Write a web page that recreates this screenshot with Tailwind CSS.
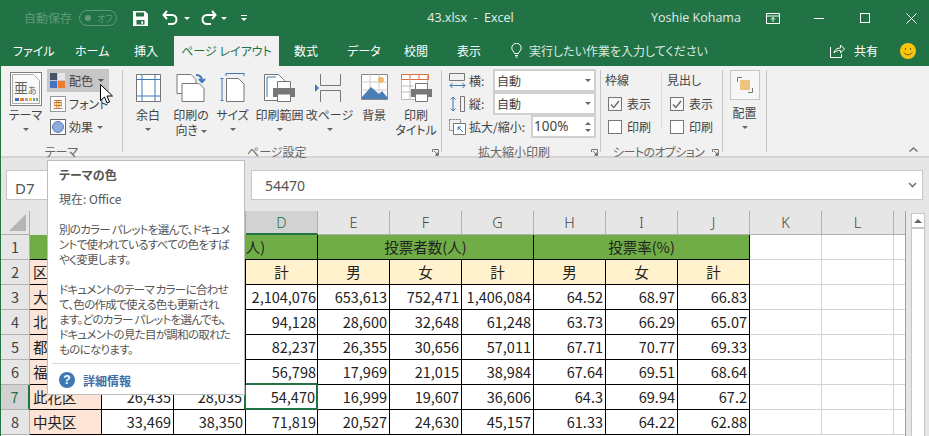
<!DOCTYPE html>
<html lang="ja">
<head>
<meta charset="utf-8">
<script src="https://cdn.jsdelivr.net/npm/@tailwindcss/browser@4"></script>
</head>
<body class="w-[929px] h-[436px] overflow-hidden relative bg-[#e6e6e6] font-['Noto_Sans_CJK_JP',sans-serif] [font-feature-settings:'palt'] text-[12px] text-[#444]">
<div class="absolute left-0 top-0 bottom-0 w-px bg-[#217346] z-20"></div>

<!-- title bar -->
<header class="h-[36px] bg-[#217346] flex items-center text-white relative">
  <span class="ml-[24px] text-[#5f9a7b] text-[12px] leading-none w-[50px]">自動保存</span>
  <span class="ml-[5px] w-[38px] h-[16px] rounded-full border border-[#5f9a7b] flex items-center pl-[5px] gap-[6px] text-[#5f9a7b] text-[9px] leading-none"><i class="w-[6px] h-[6px] rounded-full bg-[#5f9a7b]"></i>オフ</span>
  <svg class="ml-[16px]" width="15" height="15" viewBox="0 0 15 15"><path fill="#fff" d="M0 0h12l3 3v12H0z"/><path fill="#217346" d="M3 1.500h8v4H3zM3.500 9h8v4.500h-8z"/><path fill="#fff" d="M8.500 10h1.500v3H8.500z"/></svg>
  <svg class="ml-[14px]" width="18" height="16" viewBox="0 0 18 16" fill="none" stroke="#fff" stroke-width="2"><path d="M5 1 1.500 5 5 9"/><path d="M2 5h8a4.500 4.500 0 0 1 0 9H6"/></svg>
  <i class="ml-[4px] w-0 h-0 border-x-[3px] border-x-transparent border-t-[3px] border-t-white"></i>
  <svg class="ml-[9px]" width="18" height="16" viewBox="0 0 18 16" fill="none" stroke="#fff" stroke-width="2"><path d="M13 1l3.500 4L13 9"/><path d="M16 5H8a4.500 4.500 0 0 0 0 9h4"/></svg>
  <i class="ml-[4px] w-0 h-0 border-x-[3px] border-x-transparent border-t-[3px] border-t-white"></i>
  <span class="ml-[14px] flex flex-col items-center gap-[2px]"><i class="w-[6px] h-px bg-white"></i><i class="w-0 h-0 border-x-[3px] border-x-transparent border-t-[3px] border-t-white"></i></span>
  <span class="ml-[176px] w-[95px] text-center font-['Open_Sans',sans-serif] text-[12.500px] text-[#e9f1ec] whitespace-pre">43.xlsx  -  Excel</span>
  <span class="ml-[133px] font-['Open_Sans',sans-serif] text-[12.500px] text-[#e0ebe5] w-[92px] whitespace-nowrap">Yoshie Kohama</span>
  <svg class="ml-[23px]" width="14" height="11" viewBox="0 0 14 11" fill="none" stroke="#fff"><path d="M.5.500h13v10H.5zM.5 3h13M7 9V4.500M5 6.500l2-2 2 2"/></svg>
  <i class="ml-[34px] w-[10px] h-px bg-white"></i>
  <i class="ml-[36px] w-[10px] h-[10px] border border-white"></i>
  <svg class="ml-[36px]" width="11" height="11" viewBox="0 0 11 11" stroke="#fff"><path d="M.5.500l10 10M10.500.500l-10 10"/></svg>
</header>

<!-- tabs -->
<nav class="h-[30px] bg-[#217346] flex items-stretch text-white text-[12px] leading-[30px] whitespace-nowrap">
  <span class="ml-[13px] w-[34px]">ファイル</span>
  <span class="ml-[28px] w-[31px]">ホーム</span>
  <span class="ml-[28px] w-[25px]">挿入</span>
  <span class="ml-[15px] w-[105px] bg-[#f1f1f1] text-[#217346] text-center">ページ レイアウト</span>
  <span class="ml-[15px] w-[25px]">数式</span>
  <span class="ml-[28px] w-[30px]">データ</span>
  <span class="ml-[27px] w-[24px]">校閲</span>
  <span class="ml-[29px] w-[25px]">表示</span>
  <svg class="ml-[29px] mt-[7px]" width="11" height="15" viewBox="0 0 11 15" fill="none" stroke="#fff"><path d="M3.500 10.500C3 8.500.8 7.500.8 5a4.700 4.700 0 0 1 9.400 0c0 2.500-2.200 3.500-2.700 5.500zM4 12.500h3M4.500 14h2"/></svg>
  <span class="ml-[7px] w-[163px] text-[#dbe8e1]">実行したい作業を入力してください</span>
  <svg class="ml-[138px] mt-[7px]" width="15" height="15" viewBox="0 0 15 15" fill="none" stroke="#fff"><path d="M.5 4v10.500h11V11M4 10c.5-3.500 3-5 6.500-5V2l4 4-4 4V7.500C7.500 7.500 5.500 8 4 10z"/></svg>
  <span class="ml-[9px] w-[25px]">共有</span>
  <span class="ml-[21px] mt-[7px] w-[16px] h-[16px] rounded-full bg-[#f8c40c] relative"><svg class="absolute inset-0" viewBox="0 0 16 16" fill="none" stroke="#7a5a00"><path d="M4 9.500c1.500 3 6.500 3 8 0"/><path d="M5.500 5v2M10.500 5v2"/></svg></span>
</nav>

<!-- ribbon -->
<section class="h-[92px] bg-[#f1f1f1] border-b-2 border-b-[#d4d4d4] flex items-stretch leading-none text-[#444]">
  <!-- theme group -->
  <div class="w-[122px] border-r border-r-[#c6c6c6] my-[4px] ml-[1px] relative">
    <div class="flex">
      <div class="w-[43px] ml-[3px] flex flex-col items-center pt-[2px]">
        <div class="w-[32px] h-[34px] border border-[#808080] bg-white p-[1px]">
          <svg width="28" height="30" viewBox="0 0 28 30"><path fill="#fafafa" stroke="#aaa" d="M.5.500h21l6 6v23H.5z"/><text x="2" y="19" font-size="14" fill="#666" font-family="Noto Sans CJK JP">亜</text><text x="16" y="20" font-size="9" fill="#666" font-family="Noto Sans CJK JP">あ</text><path fill="#3f6fb5" d="M3 24h4v3H3z"/><path fill="#e87d2b" d="M8 24h4v3H8z"/><path fill="#a5a5a5" d="M13 24h3v3h-3z"/><path fill="#ffc000" d="M17 24h3v3h-3z"/><path fill="#5b9bd5" d="M21 24h2v3h-2z"/><path fill="#70ad47" d="M24 24h2v3h-2z"/></svg>
        </div>
        <span class="mt-[2px] text-[12px] leading-[14px]">テーマ</span>
        <i class="mt-[6px] w-0 h-0 border-x-[3px] border-x-transparent border-t-[3px] border-t-[#666]"></i>
      </div>
      <div class="flex flex-col ml-0">
        <div class="w-[62px] h-[23px] bg-[#c6c6c6] -mt-px flex items-center pl-[3px]">
          <svg width="15" height="15" viewBox="0 0 15 15"><path fill="#44546a" d="M0 0h7v7H0z"/><path fill="#e7e6e6" d="M8 0h7v7H8z"/><path fill="#4472c4" d="M0 8h7v7H0z"/><path fill="#ed7d31" d="M8 8h7v7H8z"/></svg>
          <span class="ml-[4px] w-[24px]">配色</span>
          <i class="ml-[5px] w-0 h-0 border-x-[3px] border-x-transparent border-t-[3px] border-t-[#555]"></i>
        </div>
        <div class="h-[24px] flex items-center pl-[3px]">
          <span class="w-[16px] h-[16px] border border-[#999] bg-white text-[#b5651d] text-[10px] leading-[14px] text-center">亜</span>
          <span class="ml-[3px] whitespace-nowrap">フォント</span>
        </div>
        <div class="h-[22px] flex items-center pl-[3px]">
          <span class="w-[16px] h-[16px] border border-[#666] bg-white flex items-center justify-center"><i class="w-[12px] h-[12px] rounded-full bg-[#8faadc] border border-[#5b7fc0]"></i></span>
          <span class="ml-[3px] w-[24px]">効果</span>
          <i class="ml-[4px] w-0 h-0 border-x-[3px] border-x-transparent border-t-[3px] border-t-[#666]"></i>
        </div>
      </div>
    </div>
    <div class="absolute left-0 right-0 top-[75px] text-center text-[#666] leading-[14px]">テーマ</div>
  </div>

  <!-- page setup group -->
  <div class="w-[319px] border-r border-r-[#c6c6c6] my-[4px] relative flex pl-[3px]">
    <div class="w-[44px] flex flex-col items-center pt-[4px]">
      <svg width="25" height="28" viewBox="0 0 25 28" fill="none"><path stroke="#777" fill="#fff" d="M.5.500h24v27H.5z"/><path stroke="#3f78b5" d="M6 .5v27M19 .5v27M.5 5.500h24M.5 22h24"/></svg>
      <span class="mt-[6px] leading-[14px]">余白</span>
      <i class="mt-[6px] w-0 h-0 border-x-[3px] border-x-transparent border-t-[3px] border-t-[#666]"></i>
    </div>
    <div class="w-[42px] flex flex-col items-center pt-[4px]">
      <svg width="30" height="28" viewBox="0 0 30 28" fill="none"><path stroke="#777" fill="#fff" d="M1 .5h14l5 5v14H1z"/><path stroke="#777" fill="#fff" d="M6 9.500h17l5 5v13H6z"/><path stroke="#3f78b5" stroke-width="2" d="M20 1c4 0 6 2 6 6M23 5l3 3 3-3"/></svg>
      <span class="mt-[6px] leading-[14px] whitespace-nowrap">印刷の</span>
      <span class="leading-[14px] mt-px whitespace-nowrap">向き <i class="inline-block align-middle w-0 h-0 border-x-[3px] border-x-transparent border-t-[3px] border-t-[#666]"></i></span>
    </div>
    <div class="w-[41px] flex flex-col items-center pt-[3px]">
      <svg width="25" height="29" viewBox="0 0 25 29" fill="none"><path stroke="#3f78b5" d="M6 .5h18M6 0v3M24 0v3M2 5v23M.5 5.500h3M.5 27.500h3"/><path stroke="#777" fill="#fff" d="M6.500 5.500h12l5.500 5.500v17.500H6.500z"/></svg>
      <span class="mt-[6px] leading-[14px] whitespace-nowrap">サイズ</span>
      <i class="mt-[6px] w-0 h-0 border-x-[3px] border-x-transparent border-t-[3px] border-t-[#666]"></i>
    </div>
    <div class="w-[53px] flex flex-col items-center pt-[4px]">
      <svg width="31" height="28" viewBox="0 0 31 28" fill="none"><path stroke="#777" fill="#fff" d="M.5.500h14l6 6v20H.5z"/><path stroke="#3f78b5" d="M3 3h9M3 3v20"/><path fill="#777" d="M9 14h22v9H9z"/><path fill="#fff" stroke="#777" d="M13.500 7.500h13v7h-13zM13.500 20h13v7.500h-13z"/></svg>
      <span class="mt-[6px] leading-[14px] whitespace-nowrap">印刷範囲</span>
      <i class="mt-[6px] w-0 h-0 border-x-[3px] border-x-transparent border-t-[3px] border-t-[#666]"></i>
    </div>
    <div class="w-[47px] flex flex-col items-center pt-[4px]">
      <svg class="-ml-[2px]" width="27" height="28" viewBox="0 0 27 28" fill="none"><path stroke="#777" d="M5.500 0v11.500h20V0M5.500 28V16.500h20V28"/><path fill="#3f78b5" d="M0 10v8l4-4z"/></svg>
      <span class="mt-[6px] leading-[14px] whitespace-nowrap">改ページ</span>
      <i class="mt-[6px] w-0 h-0 border-x-[3px] border-x-transparent border-t-[3px] border-t-[#666]"></i>
    </div>
    <div class="w-[42px] flex flex-col items-center pt-[4px]">
      <svg width="27" height="26" viewBox="0 0 27 26"><path fill="#fff" stroke="#888" d="M.5.500h26v25H.5z"/><path stroke="#ccc" fill="none" d="M9 .5v25M18 .5v25M.5 8h26M.5 16h26"/><circle cx="20" cy="6" r="3" fill="#eeb96a"/><path fill="#4a7db5" d="M1 23l9-10 8 7 3-3 5 6v2H1z"/></svg>
      <span class="mt-[8px] leading-[14px] whitespace-nowrap">背景</span>
    </div>
    <div class="w-[42px] flex flex-col items-center pt-[4px]">
      <svg width="31" height="28" viewBox="0 0 31 28" fill="none"><path stroke="#bbb" fill="#fff" d="M.5.500h26v25H.5z"/><path stroke="#d86f3c" d="M.5.500h27v5H.5zM9 .5v5M18 .5v5"/><path stroke="#bbb" d="M.5 12h12M.5 18h12M9 5v20"/><path fill="#777" d="M10 15h21v8H10z"/><path fill="#fff" stroke="#777" d="M14.500 9.500h12v6h-12zM14.500 20h12v7.500h-12z"/></svg>
      <span class="mt-[6px] leading-[14px] whitespace-nowrap">印刷</span>
      <span class="mt-px leading-[14px] whitespace-nowrap">タイトル</span>
    </div>
    <div class="absolute left-[124px] top-[75px] text-[#666] leading-[14px] whitespace-nowrap">ページ設定</div>
    <svg class="absolute left-[309px] top-[79px]" width="7" height="7" viewBox="0 0 7 7" fill="none" stroke="#777"><path d="M.5 3V.5H6.500V6.500H3.500M2 2l3.500 3.500M5.500 3.500v2h-2"/></svg>
  </div>

  <!-- scale group -->
  <div class="w-[159px] border-r border-r-[#c6c6c6] my-[4px] relative pl-[7px]">
    <div class="h-[23px] -mt-px flex items-center">
      <svg width="17" height="16" viewBox="0 0 17 16" fill="none" stroke="#777"><path d="M.5.500h15v7H.5z"/><path stroke="#3f78b5" d="M1 12.500h15M1 12.500l2.500-2.500M1 12.500L3.500 15M16 12.500L13.500 10M16 12.500L13.500 15"/></svg>
      <span class="ml-[3px] w-[24px]">横:</span>
      <div class="w-[103px] h-[23px] bg-white border-2 border-[#d0d0d0] flex items-center pl-[2px] justify-between pr-[3px]"><span>自動</span><i class="w-0 h-0 border-x-[3px] border-x-transparent border-t-[3px] border-t-[#666]"></i></div>
    </div>
    <div class="h-[23px] flex items-center">
      <svg width="17" height="16" viewBox="0 0 17 16" fill="none" stroke="#777"><path d="M11.500.5h4v15h-4z"/><path stroke="#3f78b5" d="M4 1v14M4 1L1.500 3.500M4 1l2.500 2.500M4 15l-2.500-2.500M4 15l2.500-2.500"/></svg>
      <span class="ml-[3px] w-[24px]">縦:</span>
      <div class="w-[103px] h-[23px] bg-white border-2 border-[#d0d0d0] flex items-center pl-[2px] justify-between pr-[3px]"><span>自動</span><i class="w-0 h-0 border-x-[3px] border-x-transparent border-t-[3px] border-t-[#666]"></i></div>
    </div>
    <div class="h-[23px] flex items-center">
      <svg width="17" height="16" viewBox="0 0 17 16" fill="none" stroke="#777"><path stroke-dasharray="2 1" d="M.5.500h11v11H.5z"/><path d="M4.500 4.500h12v11h-12z" fill="#fff"/><path stroke="#3f78b5" d="M14 13l-5-5M9 8h3M9 8v3"/></svg>
      <span class="ml-[3px] w-[62px] whitespace-nowrap">拡大/縮小:</span>
      <div class="w-[65px] h-[23px] bg-white border-2 border-[#d0d0d0] flex items-center pl-[1px] justify-between pr-[3px]"><span class="font-['Noto_Sans',sans-serif] text-[13.500px]">100%</span><span class="flex flex-col gap-[4px]"><i class="w-0 h-0 block border-x-[3px] border-x-transparent border-b-[3px] border-b-[#666]"></i><i class="w-0 h-0 block border-x-[3px] border-x-transparent border-t-[3px] border-t-[#666]"></i></span></div>
    </div>
    <div class="absolute left-[36px] top-[75px] text-[#666] leading-[14px] whitespace-nowrap">拡大縮小印刷</div>
    <svg class="absolute left-[149px] top-[79px]" width="7" height="7" viewBox="0 0 7 7" fill="none" stroke="#777"><path d="M.5 3V.5H6.500V6.500H3.500M2 2l3.500 3.500M5.500 3.500v2h-2"/></svg>
  </div>

  <!-- sheet options -->
  <div class="w-[122px] border-r border-r-[#c6c6c6] my-[4px] relative flex">
    <div class="w-[61px] border-r border-r-[#dcdcdc] h-[56px] mt-[3px] pl-[4px]">
      <div class="leading-[14px] h-[14px]">枠線</div>
      <div class="mt-[9px] h-[16px] flex items-center pl-[3px]"><span class="w-[14px] h-[14px] border border-[#777] bg-[#f7f7f7] flex items-center justify-center"><svg width="10" height="9" viewBox="0 0 10 9" fill="none" stroke="#666" stroke-width="1.300"><path d="M1 4.500 3.800 7.500 9 1"/></svg></span><span class="ml-[5px]">表示</span></div>
      <div class="mt-[7px] h-[16px] flex items-center pl-[3px]"><span class="w-[14px] h-[14px] border border-[#777] bg-white"></span><span class="ml-[5px]">印刷</span></div>
    </div>
    <div class="pl-[5px] mt-[3px]">
      <div class="leading-[14px] h-[14px]">見出し</div>
      <div class="mt-[9px] h-[16px] flex items-center pl-[3px]"><span class="w-[14px] h-[14px] border border-[#777] bg-[#f7f7f7] flex items-center justify-center"><svg width="10" height="9" viewBox="0 0 10 9" fill="none" stroke="#666" stroke-width="1.300"><path d="M1 4.500 3.800 7.500 9 1"/></svg></span><span class="ml-[5px]">表示</span></div>
      <div class="mt-[7px] h-[16px] flex items-center pl-[3px]"><span class="w-[14px] h-[14px] border border-[#777] bg-white"></span><span class="ml-[5px]">印刷</span></div>
    </div>
    <div class="absolute left-[12px] top-[75px] text-[#666] leading-[14px] whitespace-nowrap tracking-[-0.6px]">シートのオプション</div>
    <svg class="absolute left-[111px] top-[79px]" width="7" height="7" viewBox="0 0 7 7" fill="none" stroke="#777"><path d="M.5 3V.5H6.500V6.500H3.500M2 2l3.500 3.500M5.500 3.500v2h-2"/></svg>
  </div>

  <!-- arrange -->
  <div class="w-[44px] border-r border-r-[#c6c6c6] my-[4px] flex flex-col items-center">
    <div class="w-[30px] h-[30px] border border-[#c6c6c6] bg-[#f7f7f7] flex items-center justify-center">
      <svg width="16" height="16" viewBox="0 0 16 16" fill="none" stroke="#777"><path d="M.5 5V.5H5M15.500 11v4.500H11"/><path fill="#edc37f" stroke="none" d="M3 3h10v10H3z"/></svg>
    </div>
    <span class="mt-[6px] leading-[14px]">配置</span>
    <i class="mt-[6px] w-0 h-0 border-x-[3px] border-x-transparent border-t-[3px] border-t-[#666]"></i>
  </div>
  <div class="flex-1 relative"><svg class="absolute right-[11px] bottom-[4px]" width="9" height="5" viewBox="0 0 9 5" fill="none" stroke="#777" stroke-width="1.500"><path d="M.5 4.500 4.500 1 8.500 4.500"/></svg></div>
</section>

<!-- formula bar -->
<div class="h-[53px] flex items-start pt-[12px] pl-[6px]">
  <div class="w-[236px] h-[30px] bg-white border border-[#c6c6c6] pl-[8px] pt-[3px] leading-[28px] text-[15px] font-['Noto_Sans',sans-serif] text-[#555]">D7</div>
  <div class="ml-[9px] w-[672px] h-[30px] bg-white border border-[#c6c6c6] pl-[13px] pr-[5px] flex items-center justify-between text-[14px] font-['Noto_Sans',sans-serif] text-[#555]"><span>54470</span><svg width="9" height="6" viewBox="0 0 9 6" fill="none" stroke="#777" stroke-width="1.600"><path d="M1 1l3.500 3.500L8 1"/></svg></div>
</div>

<!-- sheet -->
<div class="flex pl-[1px]">
  <div class="w-[905px] h-[225px] overflow-hidden border-r border-r-[#a0a0a0] bg-white">
    <div class="grid grid-cols-[29px_72px_72px_72px_72px_72px_72px_72px_72px_72px_72px_72px_72px_13px] grid-rows-[24px_25px_25px_25px_25px_25px_25px_25px_25px_25px] text-[14.500px] leading-[23px] text-[#222] [&>div]:h-full">
      <!-- header -->
      <div class="bg-[#e6e6e6] border-r border-b border-[#b0b0b0] relative"><svg class="absolute right-[3px] bottom-[3px]" width="17" height="17" viewBox="0 0 17 17"><path fill="#b5b5b5" d="M17 0v17H0z"/></svg></div>
      <div class="bg-[#e6e6e6] border-r border-[#b0b0b0] border-b-0 text-center"></div>
      <div class="bg-[#e6e6e6] border-r border-[#b0b0b0] text-center"></div>
      <div class="bg-[#e6e6e6] border-r border-[#b0b0b0] text-center"></div>
      <div class="bg-[#d2d2d2] border-r border-[#b0b0b0] border-b-2 border-b-[#217346] text-center text-[#217346] font-['Noto_Sans',sans-serif] font-light">D</div>
      <div class="bg-[#e6e6e6] border-r border-b border-[#b0b0b0] text-center text-[#444] font-['Noto_Sans',sans-serif] font-light">E</div>
      <div class="bg-[#e6e6e6] border-r border-b border-[#b0b0b0] text-center text-[#444] font-['Noto_Sans',sans-serif] font-light">F</div>
      <div class="bg-[#e6e6e6] border-r border-b border-[#b0b0b0] text-center text-[#444] font-['Noto_Sans',sans-serif] font-light">G</div>
      <div class="bg-[#e6e6e6] border-r border-b border-[#b0b0b0] text-center text-[#444] font-['Noto_Sans',sans-serif] font-light">H</div>
      <div class="bg-[#e6e6e6] border-r border-b border-[#b0b0b0] text-center text-[#444] font-['Noto_Sans',sans-serif] font-light">I</div>
      <div class="bg-[#e6e6e6] border-r border-b border-[#b0b0b0] text-center text-[#444] font-['Noto_Sans',sans-serif] font-light">J</div>
      <div class="bg-[#e6e6e6] border-r border-b border-[#b0b0b0] text-center text-[#444] font-['Noto_Sans',sans-serif] font-light">K</div>
      <div class="bg-[#e6e6e6] border-r border-b border-[#b0b0b0] text-center text-[#444] font-['Noto_Sans',sans-serif] font-light">L</div>
      <div class="bg-[#e6e6e6] border-b border-[#b0b0b0]"></div>
      <!-- row 1 -->
      <div class="bg-[#e6e6e6] border-r border-b border-[#b0b0b0] text-center text-[#444]">1</div>
      <div class="bg-[#70ad47] border-b border-b-black border-r border-r-black"></div>
      <div class="col-span-3 bg-[#70ad47] border-r border-b border-black text-center">当日有権者数(人)</div>
      <div class="col-span-3 bg-[#70ad47] border-r border-b border-black text-center">投票者数(人)</div>
      <div class="col-span-3 bg-[#70ad47] border-r border-b border-black text-center">投票率(%)</div>
      <div class="border-r border-b border-[#d4d4d4]"></div><div class="border-r border-b border-[#d4d4d4]"></div><div class="border-b border-[#d4d4d4]"></div>
      <!-- row 2 -->
      <div class="bg-[#e6e6e6] border-r border-b border-[#b0b0b0] text-center text-[#444]">2</div>
      <div class="bg-[#fce4d6] border-r border-b border-black pl-[3px]">区名</div>
      <div class="bg-[#fff2cc] border-r border-b border-black text-center">男</div>
      <div class="bg-[#fff2cc] border-r border-b border-black text-center">女</div>
      <div class="bg-[#fff2cc] border-r border-b border-black text-center">計</div>
      <div class="bg-[#fff2cc] border-r border-b border-black text-center">男</div>
      <div class="bg-[#fff2cc] border-r border-b border-black text-center">女</div>
      <div class="bg-[#fff2cc] border-r border-b border-black text-center">計</div>
      <div class="bg-[#fff2cc] border-r border-b border-black text-center">男</div>
      <div class="bg-[#fff2cc] border-r border-b border-black text-center">女</div>
      <div class="bg-[#fff2cc] border-r border-b border-black text-center">計</div>
      <div class="border-r border-b border-[#d4d4d4]"></div><div class="border-r border-b border-[#d4d4d4]"></div><div class="border-b border-[#d4d4d4]"></div>
      <!-- row 3 -->
      <div class="bg-[#e6e6e6] border-r border-b border-[#b0b0b0] text-center text-[#444]">3</div>
      <div class="bg-[#fce4d6] border-r border-b border-black pl-[3px]">大阪市</div>
      <div class="border-r border-b border-black"></div><div class="border-r border-b border-black"></div>
      <div class="border-r border-b border-black text-right pr-[1px]">2,104,076</div>
      <div class="border-r border-b border-black text-right pr-[2px]">653,613</div>
      <div class="border-r border-b border-black text-right pr-[2px]">752,471</div>
      <div class="border-r border-b border-black text-right pr-[2px]">1,406,084</div>
      <div class="border-r border-b border-black text-right pr-[2px]">64.52</div>
      <div class="border-r border-b border-black text-right pr-[2px]">68.97</div>
      <div class="border-r border-b border-black text-right pr-[2px]">66.83</div>
      <div class="border-r border-b border-[#d4d4d4]"></div><div class="border-r border-b border-[#d4d4d4]"></div><div class="border-b border-[#d4d4d4]"></div>
      <!-- row 4 -->
      <div class="bg-[#e6e6e6] border-r border-b border-[#b0b0b0] text-center text-[#444]">4</div>
      <div class="bg-[#fce4d6] border-r border-b border-black pl-[3px]">北区</div>
      <div class="border-r border-b border-black"></div><div class="border-r border-b border-black"></div>
      <div class="border-r border-b border-black text-right pr-[1px]">94,128</div>
      <div class="border-r border-b border-black text-right pr-[2px]">28,600</div>
      <div class="border-r border-b border-black text-right pr-[2px]">32,648</div>
      <div class="border-r border-b border-black text-right pr-[2px]">61,248</div>
      <div class="border-r border-b border-black text-right pr-[2px]">63.73</div>
      <div class="border-r border-b border-black text-right pr-[2px]">66.29</div>
      <div class="border-r border-b border-black text-right pr-[2px]">65.07</div>
      <div class="border-r border-b border-[#d4d4d4]"></div><div class="border-r border-b border-[#d4d4d4]"></div><div class="border-b border-[#d4d4d4]"></div>
      <!-- row 5 -->
      <div class="bg-[#e6e6e6] border-r border-b border-[#b0b0b0] text-center text-[#444]">5</div>
      <div class="bg-[#fce4d6] border-r border-b border-black pl-[3px]">都島区</div>
      <div class="border-r border-b border-black"></div><div class="border-r border-b border-black"></div>
      <div class="border-r border-b border-black text-right pr-[1px]">82,237</div>
      <div class="border-r border-b border-black text-right pr-[2px]">26,355</div>
      <div class="border-r border-b border-black text-right pr-[2px]">30,656</div>
      <div class="border-r border-b border-black text-right pr-[2px]">57,011</div>
      <div class="border-r border-b border-black text-right pr-[2px]">67.71</div>
      <div class="border-r border-b border-black text-right pr-[2px]">70.77</div>
      <div class="border-r border-b border-black text-right pr-[2px]">69.33</div>
      <div class="border-r border-b border-[#d4d4d4]"></div><div class="border-r border-b border-[#d4d4d4]"></div><div class="border-b border-[#d4d4d4]"></div>
      <!-- row 6 -->
      <div class="bg-[#e6e6e6] border-r border-b border-[#b0b0b0] text-center text-[#444]">6</div>
      <div class="bg-[#fce4d6] border-r border-b border-black pl-[3px]">福島区</div>
      <div class="border-r border-b border-black"></div><div class="border-r border-b border-black"></div>
      <div class="border-r border-b-2 border-r-black border-b-[#217346] text-right pr-[1px]">56,798</div>
      <div class="border-r border-b border-black text-right pr-[2px]">17,969</div>
      <div class="border-r border-b border-black text-right pr-[2px]">21,015</div>
      <div class="border-r border-b border-black text-right pr-[2px]">38,984</div>
      <div class="border-r border-b border-black text-right pr-[2px]">67.64</div>
      <div class="border-r border-b border-black text-right pr-[2px]">69.51</div>
      <div class="border-r border-b border-black text-right pr-[2px]">68.64</div>
      <div class="border-r border-b border-[#d4d4d4]"></div><div class="border-r border-b border-[#d4d4d4]"></div><div class="border-b border-[#d4d4d4]"></div>
      <!-- row 7 -->
      <div class="bg-[#d2d2d2] border-r-2 border-r-[#217346] border-b border-b-[#b0b0b0] text-center text-[#217346]">7</div>
      <div class="bg-[#fce4d6] border-r border-b border-black pl-[3px]">此花区</div>
      <div class="border-r border-b border-black text-right pr-[2px]">26,435</div>
      <div class="border-r-2 border-b border-r-[#217346] border-b-black text-right pr-[2px]">28,035</div>
      <div class="border-r-2 border-b-2 border-[#217346] text-right pr-[1px] relative">54,470</div>
      <div class="border-r border-b border-black text-right pr-[2px]">16,999</div>
      <div class="border-r border-b border-black text-right pr-[2px]">19,607</div>
      <div class="border-r border-b border-black text-right pr-[2px]">36,606</div>
      <div class="border-r border-b border-black text-right pr-[2px]">64.3</div>
      <div class="border-r border-b border-black text-right pr-[2px]">69.94</div>
      <div class="border-r border-b border-black text-right pr-[2px]">67.2</div>
      <div class="border-r border-b border-[#d4d4d4]"></div><div class="border-r border-b border-[#d4d4d4]"></div><div class="border-b border-[#d4d4d4]"></div>
      <!-- row 8 -->
      <div class="bg-[#e6e6e6] border-r border-b border-[#b0b0b0] text-center text-[#444]">8</div>
      <div class="bg-[#fce4d6] border-r border-b border-black pl-[3px]">中央区</div>
      <div class="border-r border-b border-black text-right pr-[2px]">33,469</div>
      <div class="border-r border-b border-black text-right pr-[2px]">38,350</div>
      <div class="border-r border-b border-black text-right pr-[1px]">71,819</div>
      <div class="border-r border-b border-black text-right pr-[2px]">20,527</div>
      <div class="border-r border-b border-black text-right pr-[2px]">24,630</div>
      <div class="border-r border-b border-black text-right pr-[2px]">45,157</div>
      <div class="border-r border-b border-black text-right pr-[2px]">61.33</div>
      <div class="border-r border-b border-black text-right pr-[2px]">64.22</div>
      <div class="border-r border-b border-black text-right pr-[2px]">62.88</div>
      <div class="border-r border-b border-[#d4d4d4]"></div><div class="border-r border-b border-[#d4d4d4]"></div><div class="border-b border-[#d4d4d4]"></div>
    </div>
  </div>
  <!-- scrollbar -->
  <div class="ml-[5px] mt-[2px] w-[14px] h-[225px] bg-white border border-[#c6c6c6] flex flex-col">
    <div class="h-[15px] bg-white border-b-2 border-b-[#c6c6c6] flex items-center justify-center"><i class="w-0 h-0 border-x-[4px] border-x-transparent border-b-[4px] border-b-[#666]"></i></div>
  </div>
</div>

<!-- tooltip -->
<aside class="absolute left-[47px] top-[160px] w-[198px] h-[235px] bg-white border border-[#bdbdbd] px-[11px] text-[#555] z-10 whitespace-nowrap text-[11.500px] leading-[15px] tracking-[-0.7px]">
  <div class="font-bold pt-[6px] text-[#555] text-[12px] tracking-normal">テーマの色</div>
  <div class="mt-[9px] text-[12px] tracking-normal">現在: Office</div>
  <div class="mt-[16px]">別のカラー パレットを選んで、ドキュメ<br>ントで使われているすべての色をすば<br>やく変更します。</div>
  <div class="mt-[15px]">ドキュメントのテーマ カラーに合わせ<br>て、色の作成で使える色も更新され<br>ます。どのカラー パレットを選んでも、<br>ドキュメントの見た目が調和の取れた<br>ものになります。</div>
  <div class="-mx-[7px] mt-[6px] h-px bg-[#d9d9d9]"></div>
  <div class="flex items-center mt-[8px] tracking-normal">
    <span class="w-[16px] h-[16px] rounded-full bg-[#3f78b5] text-white text-[12px] font-bold leading-[16px] text-center font-['Liberation_Sans',sans-serif]">?</span>
    <span class="ml-[8px] font-bold text-[#3f6ea8] text-[12px]">詳細情報</span>
  </div>
</aside>

<!-- mouse cursor -->
<svg class="absolute left-[100px] top-[84px] z-30" width="13" height="21" viewBox="0 0 13 21"><path fill="#fff" stroke="#000" d="M.5.500v16l4-3.500 2.500 6 2.500-1-2.500-6h5.500z"/></svg>
</body>
</html>
